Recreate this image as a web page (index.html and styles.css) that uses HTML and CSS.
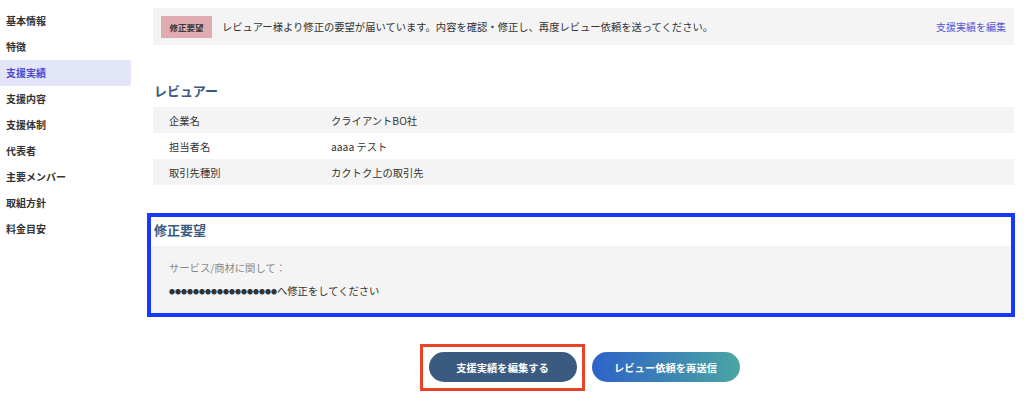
FILE: index.html
```html
<!DOCTYPE html>
<html lang="ja">
<head>
<meta charset="utf-8">
<title>支援実績</title>
<link rel="stylesheet" href="styles.css">
</head>
<body>
<div class="page">
  <nav class="sidebar">
    <div class="nav-item">基本情報</div>
    <div class="nav-item">特徴</div>
    <div class="nav-item active">支援実績</div>
    <div class="nav-item">支援内容</div>
    <div class="nav-item">支援体制</div>
    <div class="nav-item">代表者</div>
    <div class="nav-item">主要メンバー</div>
    <div class="nav-item">取組方針</div>
    <div class="nav-item">料金目安</div>
  </nav>
  <main class="main">
    <div class="banner">
      <span class="badge">修正要望</span>
      <span class="banner-msg">レビュアー様より修正の要望が届いています。内容を確認・修正し、再度レビュー依頼を送ってください。</span>
      <a class="banner-link">支援実績を編集</a>
    </div>

    <h2 class="section-title reviewer-title">レビュアー</h2>
    <div class="table">
      <div class="row gray"><span class="label">企業名</span><span class="value">クライアントBO社</span></div>
      <div class="row"><span class="label">担当者名</span><span class="value">aaaa テスト</span></div>
      <div class="row gray"><span class="label">取引先種別</span><span class="value">カクトク上の取引先</span></div>
    </div>

    <div class="request-box">
      <h2 class="section-title request-title">修正要望</h2>
      <div class="request-body">
        <p class="request-sub">サービス/商材に関して：</p>
        <p class="request-text"><span class="dots">●●●●●●●●●●●●●●●●●●</span>へ修正をしてください</p>
      </div>
    </div>

    <div class="actions">
      <button class="btn btn-dark highlighted">支援実績を編集する</button>
      <button class="btn btn-grad">レビュー依頼を再送信</button>
    </div>
  </main>
</div>
</body>
</html>
```

FILE: styles.css
```css
* { box-sizing: border-box; }
html, body {
  margin: 0;
  padding: 0;
  background: #ffffff;
  font-family: "Noto Sans CJK JP", "Noto Sans", sans-serif;
  color: #333333;
}
.page {
  display: flex;
  width: 1024px;
  height: 402px;
  overflow: hidden;
}
.sidebar {
  width: 131px;
  flex: none;
  padding-top: 8px;
}
.nav-item {
  height: 26px;
  line-height: 26px;
  padding-left: 6px;
  font-size: 10px;
  font-weight: 700;
  color: #333333;
  border-radius: 0 3px 3px 0;
}
.nav-item.active {
  background: #e3e5f9;
  color: #4a4acf;
}
.main {
  flex: none;
  width: 861px;
  margin-left: 22px;
  padding-top: 8px;
}
.banner {
  display: flex;
  align-items: center;
  height: 37px;
  background: #f4f4f4;
  padding: 0 8px;
}
.badge {
  display: inline-flex;
  align-items: center;
  justify-content: center;
  width: 51px;
  height: 22px;
  background: #e0abb1;
  font-size: 8.5px;
  font-weight: 700;
  color: #3a3a3a;
}
.banner-msg {
  margin-left: 10px;
  font-size: 10.3px;
  color: #333333;
  flex: 1;
}
.banner-link {
  font-size: 10px;
  color: #5656d6;
}
.section-title {
  margin: 0;
  font-size: 13px;
  line-height: 20px;
  font-weight: 700;
  color: #3b5a80;
}
.reviewer-title {
  margin-top: 36px;
  padding-left: 1px;
}
.table {
  margin-top: 6px;
}
.row {
  display: flex;
  align-items: center;
  height: 26px;
  font-size: 10.3px;
  color: #333333;
}
.row.gray { background: #f4f4f4; }
.label {
  width: 178px;
  padding-left: 16px;
  flex: none;
}
.request-box {
  margin-top: 28px;
  margin-left: -6px;
  width: 868px;
  border: 4px solid #1838ff;
}
.request-title {
  margin-top: 3px;
  padding-left: 3px;
}
.request-body {
  margin-top: 6px;
  background: #f4f4f4;
  padding: 12px 18px 11px;
}
.request-body p {
  margin: 0;
  font-size: 10.3px;
  line-height: 20px;
}
.request-sub { color: #8a8a8a; }
.request-text { margin-top: 3px !important; color: #333333; }
.dots {
  font-size: 6px;
  vertical-align: 1px;
  color: #333333;
}
.actions {
  display: flex;
  justify-content: center;
  gap: 15px;
  margin-top: 35px;
  padding-left: 1px;
}
.btn {
  width: 148px;
  height: 30px;
  border: none;
  border-radius: 15px;
  font-family: inherit;
  font-size: 10.3px;
  font-weight: 700;
  color: #ffffff;
  padding: 0;
}
.btn-dark { background: #3b5a80; }
.btn-grad { background: linear-gradient(90deg, #2e62c8 0%, #4aa6a3 100%); }
.highlighted { position: relative; }
.highlighted::after {
  content: "";
  position: absolute;
  left: -9px;
  right: -8px;
  top: -8px;
  bottom: -9px;
  border: 3px solid #ea4328;
}
```
